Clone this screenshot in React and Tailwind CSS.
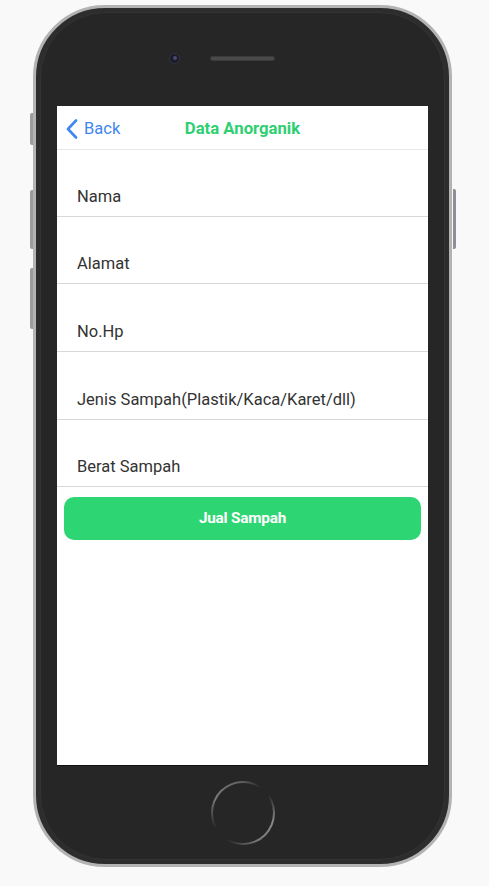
import React from "react";

const rows = [
  { label: "Nama", h: "h-[67px]" },
  { label: "Alamat", h: "h-[67px]" },
  { label: "No.Hp", h: "h-[68px]" },
  { label: "Jenis Sampah(Plastik/Kaca/Karet/dll)", h: "h-[68px]" },
  { label: "Berat Sampah", h: "h-[67px]" },
];

export default function App() {
  return (
    <div
      className="w-full h-[886px] bg-[#f9f9f9] pt-[5px] pl-[33px]"
      style={{ fontFamily: "Roboto, 'Noto Sans', sans-serif" }}
    >
      <div className="relative w-[419px] h-[862px] rounded-[72px] border-[3px] border-[#b3b3b3] bg-[#2d2d2d] p-[4px]">
        {/* side buttons */}
        <div className="absolute left-[-6px] top-[105px] w-[3px] h-[32px] rounded-l-[2px] bg-[#9c9c9c]" />
        <div className="absolute left-[-6px] top-[182px] w-[3px] h-[59px] rounded-l-[2px] bg-[#9c9c9c]" />
        <div className="absolute left-[-6px] top-[260px] w-[3px] h-[61px] rounded-l-[2px] bg-[#9c9c9c]" />
        <div className="absolute right-[-7px] top-[181px] w-[3px] h-[60px] rounded-r-[2px] bg-[#8e8e96]" />

        <div className="flex flex-col h-full rounded-[66px] border border-[#333333] bg-[#262626]">
          {/* top: camera + speaker */}
          <div className="h-[93px] grid grid-cols-[1fr_auto_1fr] items-center pb-[3px]">
            <div className="justify-self-end mr-[30px] w-[11px] h-[11px] rounded-full bg-[#1c1c28] border border-[#34343f] flex items-center justify-center">
              <div className="w-[4px] h-[4px] rounded-full bg-[#4a4a70]" />
            </div>
            <div className="w-[65px] h-[5px] rounded-full bg-[#4a4a4a] border border-[#3a3a3a]" />
            <div />
          </div>

          {/* screen */}
          <div className="mx-[16px] h-[660px] bg-white border-b border-[#111] flex flex-col">
            <div className="h-[44px] shrink-0 grid grid-cols-[1fr_auto_1fr] items-center pt-[3px] border-b border-[#e8e8e8]">
              <div className="flex items-center pl-[9px]">
                <svg width="12" height="20" viewBox="0 0 12 20" fill="none">
                  <polyline
                    points="10,1.5 2,10 10,18.5"
                    stroke="#3f86f2"
                    strokeWidth="2.6"
                    strokeLinecap="round"
                    strokeLinejoin="round"
                  />
                </svg>
                <span className="ml-[6px] text-[16.5px] text-[#3f86f2] leading-none">Back</span>
              </div>
              <div className="text-[16.7px] font-bold text-[#2ecf71] leading-none">Data Anorganik</div>
              <div />
            </div>

            {rows.map((r) => (
              <div
                key={r.label}
                className={`${r.h} shrink-0 flex items-end pl-[20px] pb-[7px] border-b border-[#d8d8d8]`}
              >
                <span className="text-[16.5px] leading-[24px] text-[#333333]">{r.label}</span>
              </div>
            ))}

            <div className="px-[7px] pt-[10px]">
              <button className="w-full h-[43px] rounded-[10px] bg-[#2ed573] text-white text-[15.3px] font-bold tracking-[-0.2px] flex items-center justify-center">
                Jual Sampah
              </button>
            </div>
          </div>

          {/* bottom: home button */}
          <div className="flex-1 flex items-center justify-center">
            <div className="w-[64px] h-[64px] rounded-full p-[2px] bg-[conic-gradient(from_0deg,#5e5e5e_0deg,#262626_35deg,#262626_55deg,#8a8a8a_105deg,#7a7a7a_150deg,#262626_212deg,#262626_240deg,#7c7c7c_300deg,#5e5e5e_360deg)]">
              <div className="w-full h-full rounded-full bg-[#262626]" />
            </div>
          </div>
        </div>
      </div>
    </div>
  );
}
